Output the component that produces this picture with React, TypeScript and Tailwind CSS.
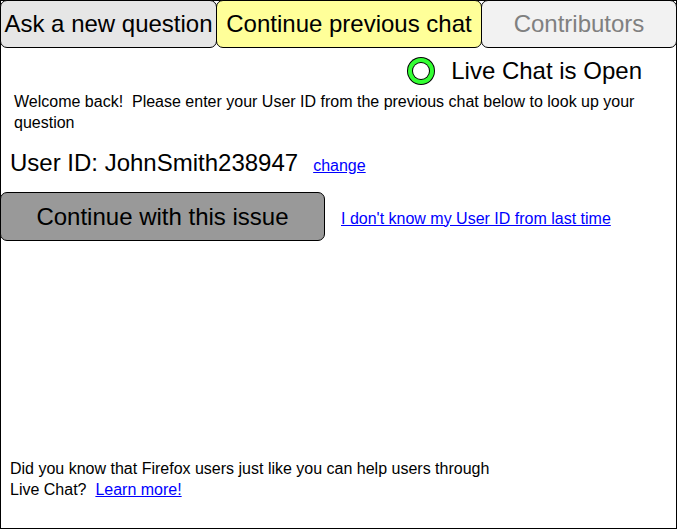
import React from 'react'

const font = { fontFamily: '"Liberation Sans", Arial, sans-serif' }

const tabs = [
  { label: 'Ask a new question', cls: 'w-[217px] bg-[#e6e6e6] text-black' },
  { label: 'Continue previous chat', cls: 'w-[266px] bg-[#ffff99] text-black' },
  { label: 'Contributors', cls: 'flex-1 bg-[#f2f2f2] text-[#808080]' },
]

const App: React.FC = () => {
  return (
    <div className="w-[677px] h-[529px] bg-white" style={font}>
      <div className="relative w-full h-full border border-black flex flex-col">
        {/* Tab strip */}
        <div className="flex h-[48px] -mt-px -mx-px">
          {tabs.map((t) => (
            <div
              key={t.label}
              className={`${t.cls} h-full -ml-px first:ml-0 border border-black rounded-[7px] flex items-center justify-center text-[24px] leading-none`}
            >
              {t.label}
            </div>
          ))}
        </div>

        {/* Status */}
        <div className="flex items-center justify-end pr-[34px] mt-[9px] h-[28px]">
          <span className="w-[28px] h-[28px] rounded-full bg-black flex items-center justify-center">
            <span className="w-[26px] h-[26px] rounded-full bg-[#33ff33] flex items-center justify-center">
              <span className="w-[18px] h-[18px] rounded-full bg-black flex items-center justify-center">
                <span className="w-[16px] h-[16px] rounded-full bg-white" />
              </span>
            </span>
          </span>
          <span className="ml-[16px] text-[24px] leading-none">Live Chat is Open</span>
        </div>

        <p className="mt-[6px] ml-[13px] mr-[24px] text-[16px] leading-[21px]">
          Welcome back!&nbsp; Please enter your User ID from the previous chat below to look up your question
        </p>

        <div className="flex items-baseline mt-[18px] ml-[9px]">
          <span className="text-[24px] leading-none">User ID: JohnSmith238947</span>
          <a href="#" className="ml-[15px] text-[16px] text-[#0000ff] underline">
            change
          </a>
        </div>

        <div className="flex items-center mt-[14px] -ml-px">
          <button className="w-[325px] h-[49px] bg-[#999999] border border-black rounded-[7px] text-[24px] leading-none text-black">
            Continue with this issue
          </button>
          <a href="#" className="ml-[16px] mt-[4px] text-[16px] text-[#0000ff] underline">
            I don't know my User ID from last time
          </a>
        </div>

        <p className="mt-auto mb-[28px] ml-[9px] text-[16px] leading-[21px]">
          Did you know that Firefox users just like you can help users through
          <br />
          Live Chat?&nbsp;{' '}
          <a href="#" className="text-[#0000ff] underline">
            Learn more!
          </a>
        </p>
      </div>
    </div>
  )
}

export default App
